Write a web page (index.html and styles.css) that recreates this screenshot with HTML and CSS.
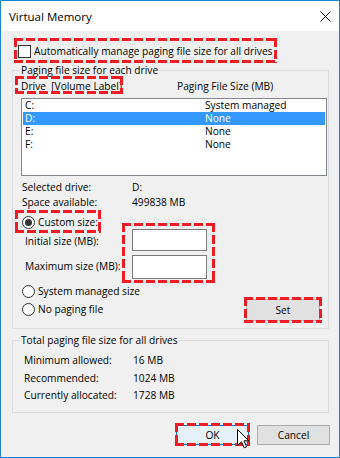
FILE: index.html
```html
<!DOCTYPE html>
<html lang="en">
<head>
  <meta charset="UTF-8">
  <meta name="viewport" content="width=device-width, initial-scale=1.0">
  <title>Virtual Memory</title>
  <link rel="stylesheet" href="styles.css">
</head>
<body>

  <div class="window">
    <div class="titlebar">
      <span class="title">Virtual Memory</span>
      <svg class="close" width="11" height="11" viewBox="0 0 11 11">
        <path d="M0.5 0.5 L10.5 10.5 M10.5 0.5 L0.5 10.5" stroke="#000" stroke-width="1" fill="none"/>
      </svg>
    </div>

    <div class="content">
      <div class="mark auto">
        <span class="check"></span>
        <span>Automatically manage paging file size for all drives</span>
      </div>

      <div class="group group-1">
        <div class="group-title">Paging file size for each drive</div>

        <div class="list-head">
          <div class="mark drive-mark">Drive&nbsp;&nbsp;[Volume Label]</div>
          <div class="col-head">Paging File Size (MB)</div>
        </div>

        <div class="list">
          <div class="row"><span class="cell">C:</span><span>System managed</span></div>
          <div class="row sel"><span class="cell">D:</span><span>None</span></div>
          <div class="row"><span class="cell">E:</span><span>None</span></div>
          <div class="row"><span class="cell">F:</span><span>None</span></div>
        </div>

        <div class="info">
          <div class="info-row"><span class="info-label">Selected drive:</span><span>D:</span></div>
          <div class="info-row"><span class="info-label">Space available:</span><span>499838 MB</span></div>
        </div>

        <div class="mark custom-mark">
          <span class="radio on"></span>
          <span>Custom size:</span>
        </div>

        <div class="sizes">
          <div class="size-labels">
            <div>Initial size (MB):</div>
            <div class="size-label-2">Maximum size (MB):</div>
          </div>
          <div class="mark size-mark">
            <div class="field"></div>
            <div class="field tall"></div>
          </div>
        </div>

        <div class="lower">
          <div class="radios">
            <div class="opt"><span class="radio"></span><span>System managed size</span></div>
            <div class="opt"><span class="radio"></span><span>No paging file</span></div>
          </div>
          <div class="mark set-mark">
            <div class="btn">Set</div>
          </div>
        </div>
      </div>

      <div class="group group-2">
        <div class="group-title">Total paging file size for all drives</div>
        <div class="totals">
          <div class="info-row"><span class="total-label">Minimum allowed:</span><span>16 MB</span></div>
          <div class="info-row"><span class="total-label">Recommended:</span><span>1024 MB</span></div>
          <div class="info-row"><span class="total-label">Currently allocated:</span><span>1728 MB</span></div>
        </div>
      </div>

      <div class="actions">
        <div class="mark ok-mark">
          <div class="btn ok">OK</div>
          <svg class="cursor" width="13" height="20" viewBox="0 0 13 20">
            <path d="M0.5 0.5 L0.5 16.5 L4.5 12.8 L7.2 18.8 L9.6 17.8 L7 11.8 L11.8 11.8 Z" fill="#fff" stroke="#000" stroke-width="1" stroke-linejoin="miter"/>
          </svg>
        </div>
        <div class="btn cancel">Cancel</div>
      </div>
    </div>
  </div>

</body>
</html>
```

FILE: styles.css
```css
body {
  margin: 0;
  font-family: "Open Sans", "Noto Sans", sans-serif;
  font-size: 10.2px;
  line-height: 13px;
  color: #000;
}

.window {
  width: 340px;
  height: 458px;
  box-sizing: border-box;
  border: 1px solid #1a82d8;
  background-color: #f0f0f0;
  overflow: hidden;
}

.titlebar {
  height: 30px;
  background-color: #fff;
  display: flex;
  align-items: center;
  justify-content: space-between;
  padding: 0 8px 0 8px;
}

.title {
  font-size: 11.5px;
}

.content {
  padding: 7px 0 0 11px;
}

/* red dashed highlight drawn over the marked controls */
.mark {
  position: relative;
  box-sizing: border-box;
}

.mark::after {
  content: "";
  position: absolute;
  inset: 0;
  pointer-events: none;
  background:
    repeating-linear-gradient(90deg, #ee1c24 0 9px, transparent 9px 12px) left top / 100% 3px no-repeat,
    repeating-linear-gradient(90deg, #ee1c24 0 9px, transparent 9px 12px) left bottom / 100% 3px no-repeat,
    repeating-linear-gradient(180deg, #ee1c24 0 9px, transparent 9px 12px) left top / 3px 100% no-repeat,
    repeating-linear-gradient(180deg, #ee1c24 0 9px, transparent 9px 12px) right top / 3px 100% no-repeat;
}

.auto {
  margin-left: 2px;
  width: 263px;
  height: 25px;
  display: flex;
  align-items: center;
  padding: 2px 0 0 4px;
  white-space: nowrap;
}

.check {
  width: 13px;
  height: 13px;
  box-sizing: border-box;
  border: 1px solid #333;
  background-color: #fff;
  margin-right: 3px;
  flex: none;
}

.group {
  box-sizing: border-box;
  width: 317px;
  border: 1px solid #dcdcdc;
}

.group-1 {
  margin-top: 7px;
  height: 259px;
}

.group-2 {
  margin-top: 11px;
  height: 73px;
}

.group-title {
  display: table;
  margin: -7px 0 0 7px;
  padding: 0 1px;
  background-color: #f0f0f0;
}

.list-head {
  display: flex;
  margin-top: -1px;
  height: 18px;
}

.drive-mark {
  margin-left: 2px;
  width: 108px;
  height: 18px;
  padding: 4px 0 0 6px;
  white-space: nowrap;
}

.col-head {
  margin-left: 54px;
  padding-top: 4px;
}

.list {
  margin: 4px 0 0 8px;
  width: 306px;
  height: 78px;
  box-sizing: border-box;
  border: 1px solid #828790;
  background-color: #fff;
}

.row {
  display: flex;
  height: 13px;
  padding-left: 3px;
}

.row.sel {
  background-color: #3399ff;
  color: #fff;
  margin: 0 1px;
  padding-left: 2px;
}

.cell {
  width: 180px;
}

.info {
  margin: 5px 0 0 9px;
}

.info-row {
  display: flex;
}

.info .info-row + .info-row {
  margin-top: 2px;
}

.info-label {
  width: 110px;
}

.custom-mark {
  margin: 1px 0 0 2px;
  width: 86px;
  height: 23px;
  display: flex;
  align-items: center;
  padding: 2px 0 0 7px;
}

.radio {
  width: 13px;
  height: 13px;
  box-sizing: border-box;
  border: 1px solid #333;
  border-radius: 50%;
  background-color: #fff;
  margin-right: 3px;
  display: flex;
  align-items: center;
  justify-content: center;
  flex: none;
}

.radio.on::after {
  content: "";
  width: 7px;
  height: 7px;
  border-radius: 50%;
  background-color: #333;
}

.sizes {
  display: flex;
  margin-top: -10px;
}

.size-labels {
  width: 109px;
  box-sizing: border-box;
  padding: 12px 0 0 12px;
}

.size-label-2 {
  margin-top: 12px;
}

.size-mark {
  width: 93px;
  height: 60px;
  padding: 6px 0 0 10px;
  display: flex;
  flex-direction: column;
  gap: 4px;
}

.field {
  width: 75px;
  height: 22px;
  box-sizing: border-box;
  border: 1px solid #7a7a7a;
  background-color: #fff;
}

.field.tall {
  height: 24px;
}

.lower {
  display: flex;
  margin-top: 1px;
}

.radios {
  margin-left: 9px;
  display: flex;
  flex-direction: column;
  gap: 3px;
}

.opt {
  height: 15px;
  display: flex;
  align-items: center;
}

.set-mark {
  margin: 13px 6px 0 auto;
  width: 78px;
  height: 26px;
  padding: 2px;
}

.btn {
  box-sizing: border-box;
  border: 1px solid #adadad;
  background-color: #e1e1e1;
  display: flex;
  align-items: center;
  justify-content: center;
  width: 100%;
  height: 100%;
}

.totals {
  padding: 5px 0 0 11px;
  line-height: 17.5px;
}

.total-label {
  width: 109px;
}

.actions {
  display: flex;
  justify-content: flex-end;
  margin-top: 10px;
  padding-right: 9px;
}

.ok-mark {
  width: 75px;
  height: 23px;
  padding: 2px 1px 1px 1px;
}

.btn.ok {
  border-color: #0078d7;
  background-color: #e5f1fb;
}

.cursor {
  position: absolute;
  left: 62px;
  top: 6px;
  z-index: 1;
}

.btn.cancel {
  width: 73px;
  height: 20px;
  margin: 2px 0 0 7px;
}
```
